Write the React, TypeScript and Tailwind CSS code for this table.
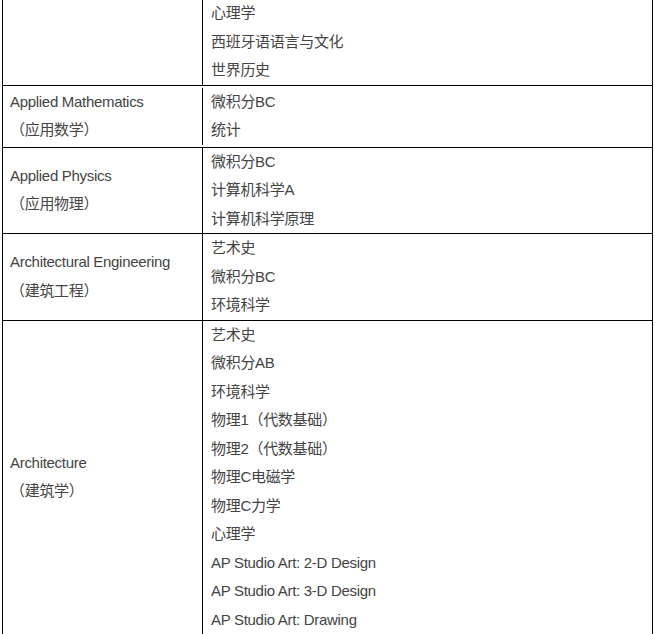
const ROWS: { left: string[]; right: string[]; pad?: boolean; first?: boolean }[] = [
  { left: [], right: ["心理学", "西班牙语语言与文化", "世界历史"], first: true },
  { left: ["Applied Mathematics", "（应用数学）"], right: ["微积分BC", "统计"], pad: true },
  { left: ["Applied Physics", "（应用物理）"], right: ["微积分BC", "计算机科学A", "计算机科学原理"] },
  { left: ["Architectural Engineering", "（建筑工程）"], right: ["艺术史", "微积分BC", "环境科学"] },
  {
    left: ["Architecture", "（建筑学）"],
    right: [
      "艺术史",
      "微积分AB",
      "环境科学",
      "物理1（代数基础）",
      "物理2（代数基础）",
      "物理C电磁学",
      "物理C力学",
      "心理学",
      "AP Studio Art: 2-D Design",
      "AP Studio Art: 3-D Design",
      "AP Studio Art: Drawing",
    ],
  },
];

function Lines({ items }: { items: string[] }) {
  return (
    <>
      {items.map((t, i) => (
        <p key={i} className="whitespace-nowrap">
          {t}
        </p>
      ))}
    </>
  );
}

export default function App() {
  return (
    <div className="h-[634px] w-[655px] overflow-hidden bg-white">
      <div
        className="-mt-[1px] ml-[2px] w-[651px] border-x border-black text-[15px] leading-[28.5px] tracking-[-0.3px] text-[#444]"
        style={{ fontFamily: '"Liberation Sans", "Noto Sans CJK SC", sans-serif' }}
      >
        {ROWS.map((row, i) => (
          <div
            key={i}
            className={`grid grid-cols-[200px_1fr] ${row.first ? "" : "border-t border-black"} ${
              row.pad ? "py-[2px]" : ""
            }`}
          >
            <div className="flex flex-col justify-center border-r border-black pl-[7px]">
              <Lines items={row.left} />
            </div>
            <div className="pl-[8px]">
              <Lines items={row.right} />
            </div>
          </div>
        ))}
      </div>
    </div>
  );
}
